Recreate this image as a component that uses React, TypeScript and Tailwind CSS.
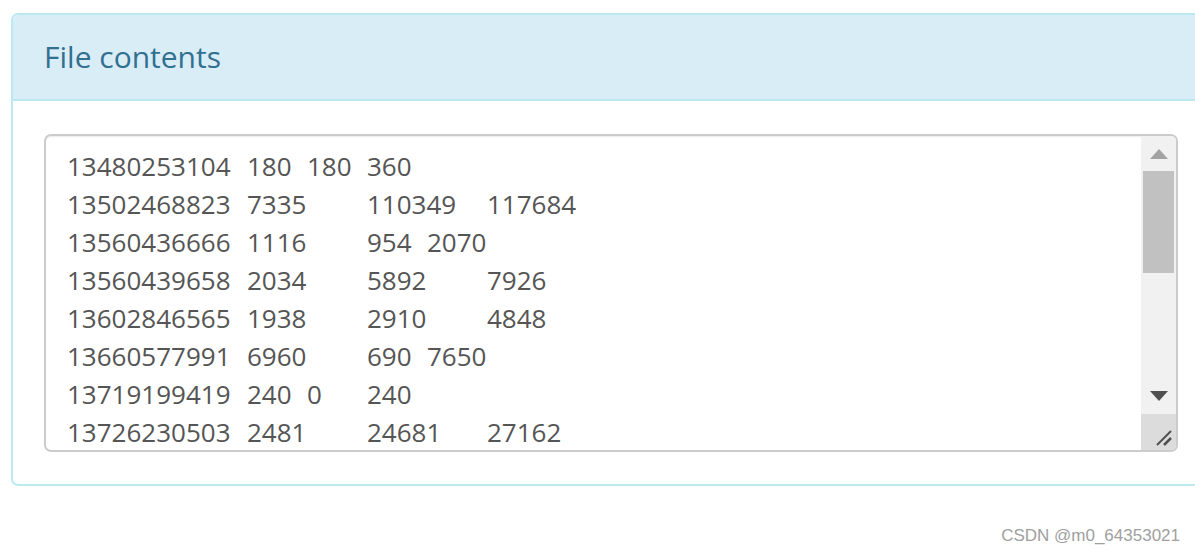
const rows = [
  '13480253104\t180\t180\t360',
  '13502468823\t7335\t110349\t117684',
  '13560436666\t1116\t954\t2070',
  '13560439658\t2034\t5892\t7926',
  '13602846565\t1938\t2910\t4848',
  '13660577991\t6960\t690\t7650',
  '13719199419\t240\t0\t240',
  '13726230503\t2481\t24681\t27162',
];

function Scrollbar() {
  return (
    <div className="w-[35px] shrink-0 flex flex-col bg-[#f1f1f1]">
      <div className="h-[35px] flex items-center justify-center">
        <svg width="18" height="10" viewBox="0 0 18 10">
          <path d="M9 0 L18 10 L0 10 Z" fill="#a3a3a3" />
        </svg>
      </div>
      <div className="h-[102px] mx-[2px] bg-[#c1c1c1]" />
      <div className="flex-1" />
      <div className="h-[36px] flex items-center justify-center">
        <svg width="18" height="10" viewBox="0 0 18 10">
          <path d="M0 0 L18 0 L9 10 Z" fill="#505050" />
        </svg>
      </div>
      <div className="h-[36px] bg-[#dcdcdc] flex items-end justify-end pr-[3px] pb-[3px]">
        <svg width="18" height="18" viewBox="0 0 18 18">
          <path d="M2 16 L16 2" stroke="#505050" strokeWidth="2" />
          <path d="M9 16 L16 9" stroke="#505050" strokeWidth="2.5" />
        </svg>
      </div>
    </div>
  );
}

export default function App() {
  return (
    <div
      className="relative w-[1195px] h-[556px] overflow-hidden bg-white"
      style={{ fontFamily: '"Open Sans", "Noto Sans", sans-serif' }}
    >
      <div className="ml-[11px] mt-[13px] w-[1202px] border-2 border-[#bce8f1] rounded-[7px] overflow-hidden">
        <div className="h-[86px] bg-[#d9edf7] border-b-2 border-[#bce8f1] px-[31px] flex items-center">
          <h3 className="text-[30px] text-[#31708f] leading-none -mt-[1px]">File contents</h3>
        </div>
        <div className="px-[31px] pt-[33px] pb-[32px]">
          <div className="w-[1134px] h-[318px] border-2 border-[#ccc] rounded-[7px] flex overflow-hidden shadow-[inset_0_1px_1px_rgba(0,0,0,0.075)]">
            <div className="flex-1 overflow-hidden pl-[21px] pt-[11px] text-[26px] leading-[38px] text-[#555] whitespace-pre [tab-size:60px]">
              {rows.map((r) => (
                <div key={r}>{r}</div>
              ))}
            </div>
            <Scrollbar />
          </div>
        </div>
      </div>
      <div
        className="absolute right-[15px] bottom-[8px] text-[17px] text-[#a0a0a0]"
        style={{ fontFamily: '"Liberation Sans", Arial, sans-serif' }}
      >
        CSDN @m0_64353021
      </div>
    </div>
  );
}
